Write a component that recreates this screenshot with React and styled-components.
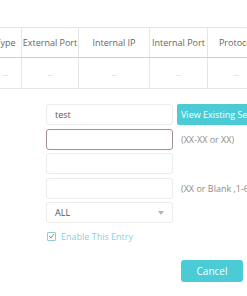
import React from 'react'
import styled, { createGlobalStyle, css } from 'styled-components'

const GlobalStyle = createGlobalStyle`
  html, body {
    margin: 0;
    padding: 0;
    background: #ffffff;
    overflow: hidden;
  }
  body {
    font-family: "Open Sans", "Liberation Sans", sans-serif;
    font-size: 9px;
    color: #555555;
  }
`;

const Page = styled.div`
  width: 247px;
  height: 296px;
  overflow: hidden;
  padding-top: 27px;
  box-sizing: border-box;
`;

const TableViewport = styled.div`
  width: 247px;
  overflow: hidden;
`;

const Table = styled.table`
  border-collapse: collapse;
  margin-left: -11px;
  table-layout: fixed;
  width: ${p => p.w}px;
`;

const HeadCell = styled.th`
  width: ${p => p.w}px;
  height: 30px;
  padding: 0;
  font-weight: normal;
  font-size: 9px;
  color: #666666;
  text-align: center;
  white-space: nowrap;
  border: 1px solid #e6e6e6;
  border-bottom: 1px solid #a9ddd9;
  box-sizing: border-box;
`;

const BodyCell = styled.td`
  height: 30px;
  padding: 0;
  text-align: center;
  color: #d0d0d0;
  font-size: 8px;
  border: 1px solid #e6e6e6;
  border-top: none;
`;

const Form = styled.div`
  display: flex;
  flex-direction: column;
  gap: 3.5px;
  margin-top: 15px;
  padding-left: 46px;
`;

const Row = styled.div`
  display: flex;
  align-items: center;
  gap: 4px;
  height: 21px;
`;

const Field = styled.div`
  width: 127px;
  height: 21px;
  box-sizing: border-box;
  border: 1px solid #ececec;
  border-radius: 3px;
  display: flex;
  align-items: center;
  justify-content: space-between;
  padding: 0 8px;
  color: #555555;
  font-size: 9px;
  flex-shrink: 0;
  ${p => p.active && css`
    border-color: #a78d9a;
  `}
`;

const Arrow = styled.span`
  width: 0;
  height: 0;
  border-left: 3.5px solid transparent;
  border-right: 3.5px solid transparent;
  border-top: 4px solid #b5b5b5;
`;

const TealButton = styled.div`
  height: 21px;
  display: flex;
  align-items: center;
  padding: 0 4px;
  background: #4acbd6;
  color: #ffffff;
  border-radius: 2px;
  white-space: nowrap;
  font-size: 9px;
  flex-shrink: 0;
`;

const Hint = styled.span`
  color: #8c8c8c;
  font-size: 9px;
  white-space: nowrap;
  padding-left: 4px;
`;

const CheckRow = styled.label`
  display: flex;
  align-items: center;
  gap: 5px;
  margin-top: 3px;
  padding-left: 1px;
  color: #87d2d8;
  font-size: 9px;
`;

const Box = styled.span`
  width: 7px;
  height: 7px;
  border: 1px solid #8fcfd4;
  border-radius: 1px;
  display: flex;
  align-items: center;
  justify-content: center;
`;

const Actions = styled.div`
  display: flex;
  padding-left: 181px;
  margin-top: 17px;
`;

const CancelButton = styled.div`
  width: 62px;
  height: 22px;
  border-radius: 3px;
  background: #4acbd6;
  color: #ffffff;
  font-size: 10px;
  display: flex;
  align-items: center;
  justify-content: center;
`;

const columns = [
  { label: 'Type', w: 32 },
  { label: 'External Port', w: 57 },
  { label: 'Internal IP', w: 71 },
  { label: 'Internal Port', w: 58 },
  { label: 'Protocol', w: 58 },
  { label: 'Status', w: 50 },
]

const tableWidth = columns.reduce((s, c) => s + c.w, 0)

export default function App() {
  return (
    <Page>
      <GlobalStyle />
      <TableViewport>
        <Table w={tableWidth}>
          <thead>
            <tr>
              {columns.map(c => (
                <HeadCell key={c.label} w={c.w}>{c.label}</HeadCell>
              ))}
            </tr>
          </thead>
          <tbody>
            <tr>
              {columns.map(c => (
                <BodyCell key={c.label}>--</BodyCell>
              ))}
            </tr>
          </tbody>
        </Table>
      </TableViewport>
      <Form>
        <Row>
          <Field>test</Field>
          <TealButton>View Existing Services</TealButton>
        </Row>
        <Row>
          <Field active />
          <Hint>(XX-XX or XX)</Hint>
        </Row>
        <Row>
          <Field />
        </Row>
        <Row>
          <Field />
          <Hint>(XX or Blank ,1-65535)</Hint>
        </Row>
        <Row>
          <Field>
            ALL
            <Arrow />
          </Field>
        </Row>
        <CheckRow>
          <Box>
            <svg width="7" height="6" viewBox="0 0 7 6">
              <path d="M1 3 L3 5 L6 1" fill="none" stroke="#8a9a9c" strokeWidth="1" />
            </svg>
          </Box>
          Enable This Entry
        </CheckRow>
      </Form>
      <Actions>
        <CancelButton>Cancel</CancelButton>
      </Actions>
    </Page>
  )
}
